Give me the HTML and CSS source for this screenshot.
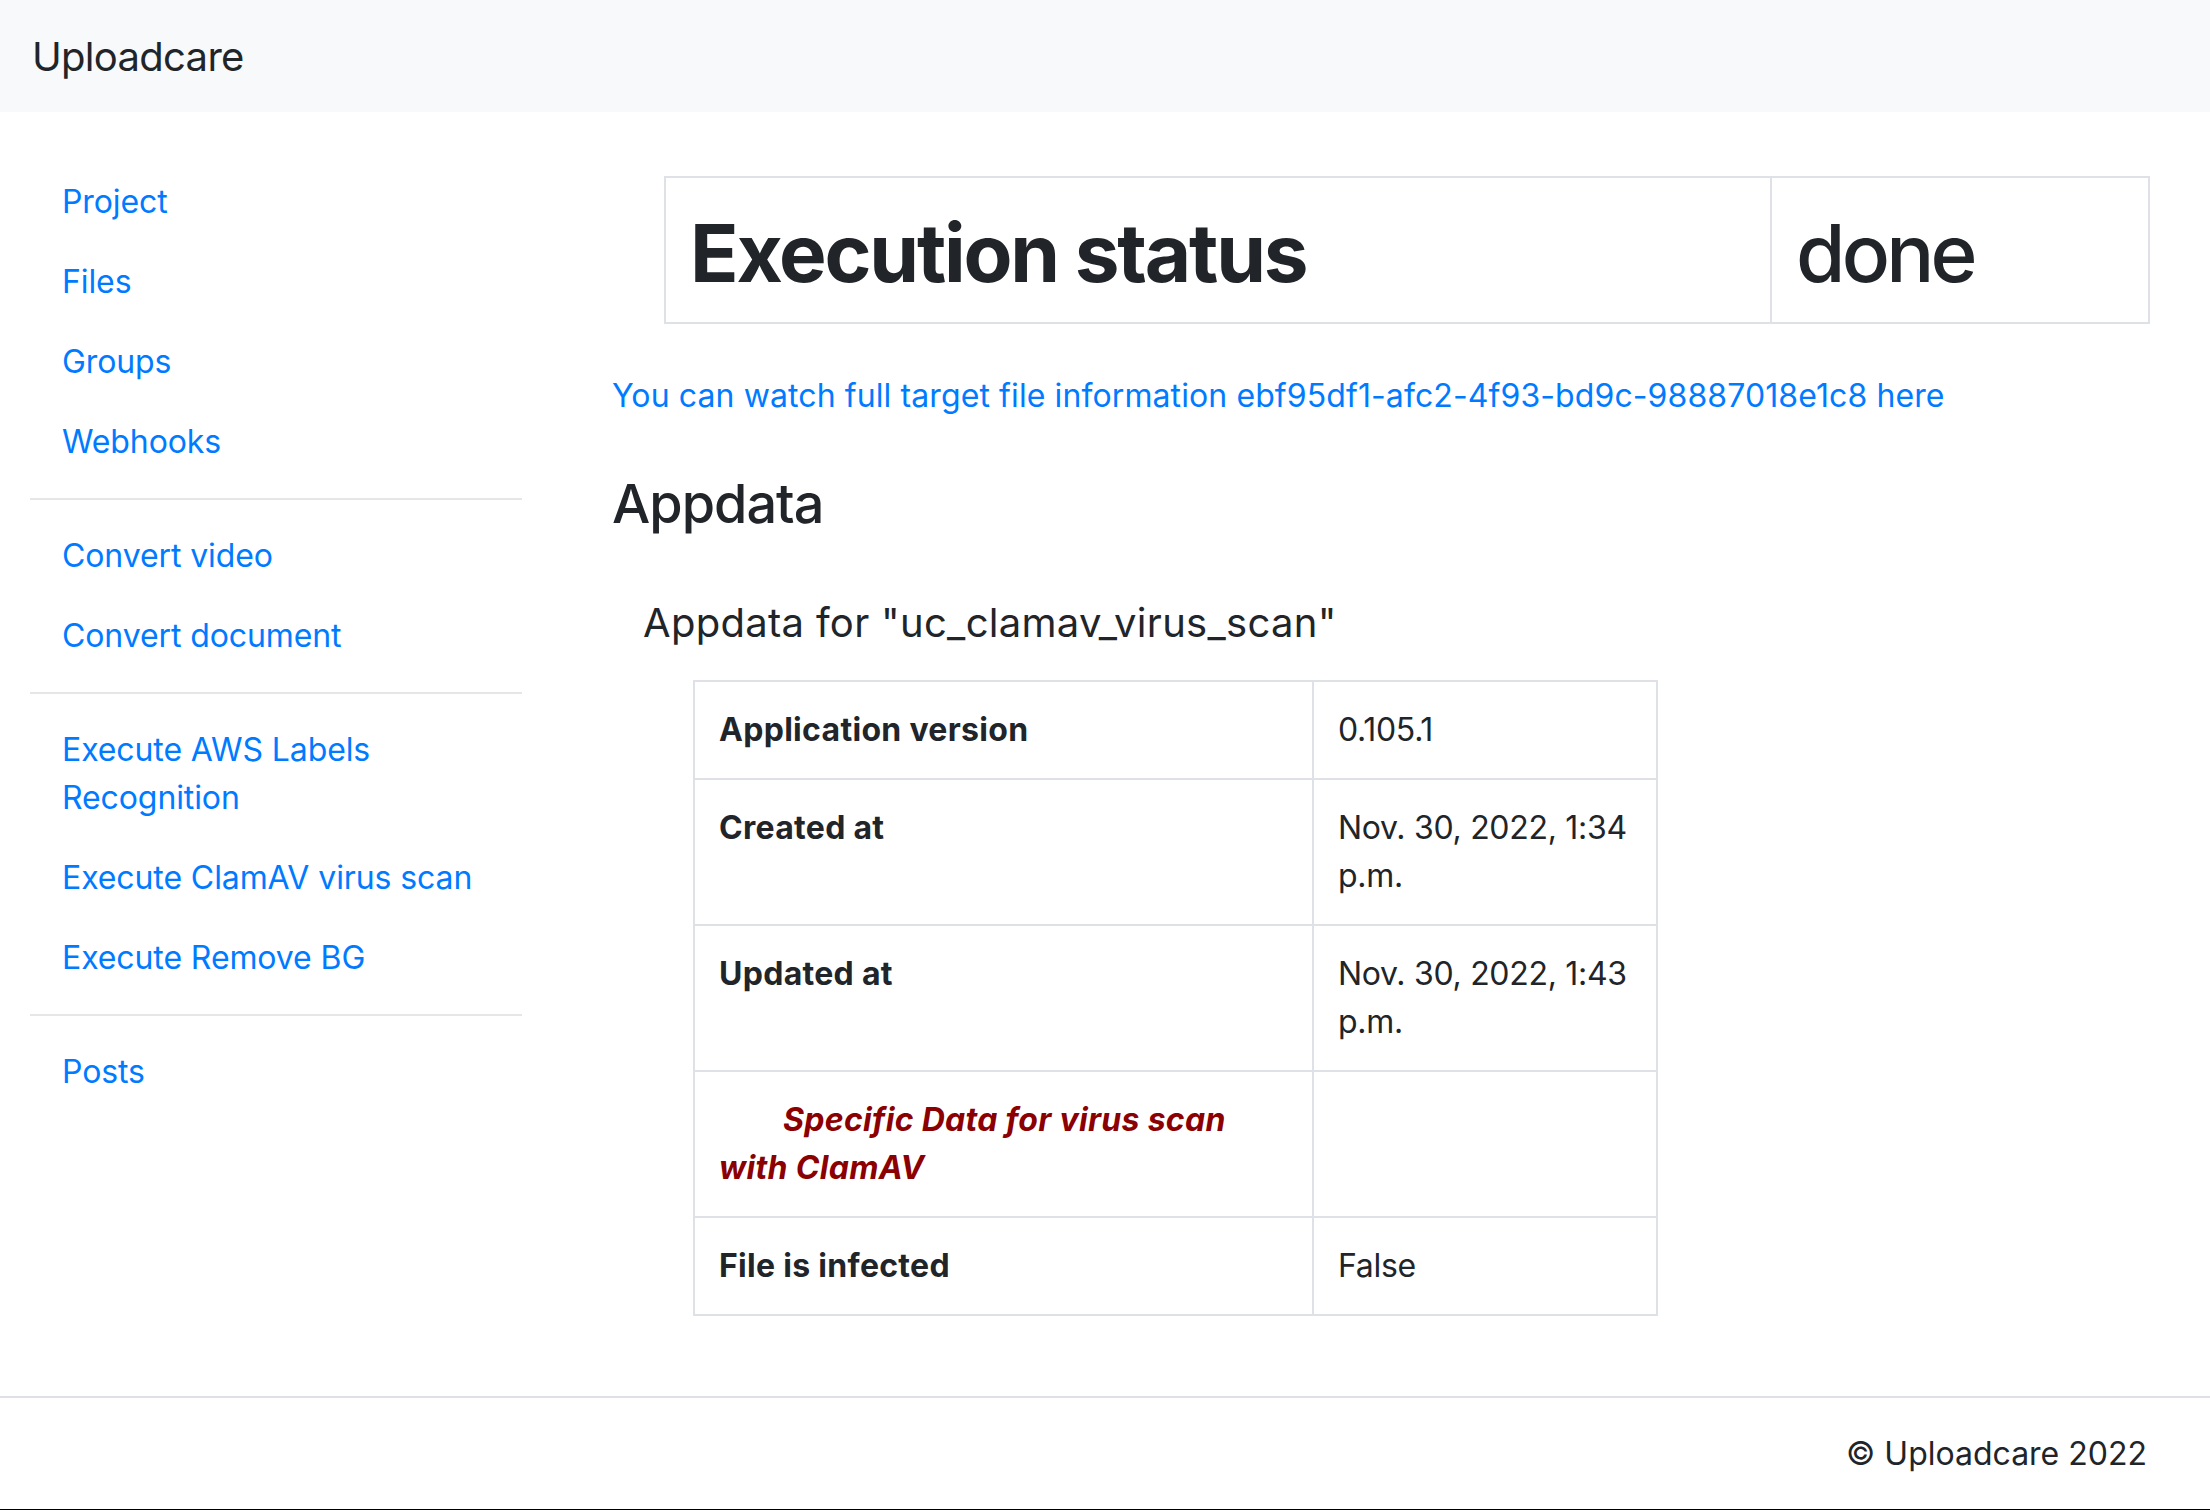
FILE: index.html
```html
<!DOCTYPE html>
<html lang="en">
<head>
<meta charset="utf-8">
<title>Uploadcare</title>
<link rel="stylesheet" href="styles.css">
</head>
<body>
<nav class="navbar">
  <a class="brand" href="#">Uploadcare</a>
</nav>
<div class="layout">
  <aside class="sidebar">
    <ul class="nav">
      <li><a class="nav-link" href="#">Project</a></li>
      <li><a class="nav-link" href="#">Files</a></li>
      <li><a class="nav-link" href="#">Groups</a></li>
      <li><a class="nav-link" href="#">Webhooks</a></li>
    </ul>
    <hr class="divider">
    <ul class="nav">
      <li><a class="nav-link" href="#">Convert video</a></li>
      <li><a class="nav-link" href="#">Convert document</a></li>
    </ul>
    <hr class="divider">
    <ul class="nav">
      <li><a class="nav-link" href="#">Execute AWS Labels Recognition</a></li>
      <li><a class="nav-link" href="#">Execute ClamAV virus scan</a></li>
      <li><a class="nav-link" href="#">Execute Remove BG</a></li>
    </ul>
    <hr class="divider">
    <ul class="nav">
      <li><a class="nav-link" href="#">Posts</a></li>
    </ul>
  </aside>
  <main class="main">
    <table class="status-table">
      <colgroup><col class="status-col-label"><col class="status-col-value"></colgroup>
      <tr>
        <th><h1 class="status-label">Execution status</h1></th>
        <td><h1 class="status-value">done</h1></td>
      </tr>
    </table>
    <p class="target-link"><a href="#">You can watch full target file information ebf95df1-afc2-4f93-bd9c-98887018e1c8 here</a></p>
    <h3 class="section-title">Appdata</h3>
    <h5 class="app-title">Appdata for "uc_clamav_virus_scan"</h5>
    <table class="data-table">
      <colgroup><col class="data-col-label"><col class="data-col-value"></colgroup>
      <tr><th>Application version</th><td>0.105.1</td></tr>
      <tr><th>Created at</th><td>Nov. 30, 2022, 1:34 p.m.</td></tr>
      <tr><th>Updated at</th><td>Nov. 30, 2022, 1:43 p.m.</td></tr>
      <tr><th class="specific">Specific Data for virus scan with ClamAV</th><td></td></tr>
      <tr><th>File is infected</th><td>False</td></tr>
    </table>
  </main>
</div>
<footer class="footer">© Uploadcare 2022</footer>
</body>
</html>
```

FILE: styles.css
```css
html, body {
  margin: 0;
  padding: 0;
}

body {
  font-family: Inter, "Noto Sans", "Liberation Sans", sans-serif;
  font-size: 32px;
  line-height: 48px;
  color: #212529;
  background: #fff;
  min-height: 100vh;
  display: flex;
  flex-direction: column;
}

a {
  color: #007bff;
  text-decoration: none;
}

.navbar {
  height: 112px;
  box-sizing: border-box;
  background: #f8f9fa;
  padding: 2px 32px 0 32px;
  display: flex;
  align-items: center;
}

.brand {
  color: #212529;
  font-size: 40px;
  line-height: 60px;
  letter-spacing: -0.7px;
}

.layout {
  display: flex;
  flex: 1;
}

.sidebar {
  width: 552px;
  flex: none;
  box-sizing: border-box;
  padding: 50px 30px 0 30px;
}

.nav {
  list-style: none;
  margin: 0;
  padding: 0;
}

.nav-link {
  display: block;
  padding: 16px 32px;
  letter-spacing: -0.1px;
}

.divider {
  border: 0;
  border-top: 2px solid #e6e6e6;
  margin: 16px 0;
}

.main {
  flex: 1;
  min-width: 0;
  padding: 64px 50px 0 60px;
}

.status-table {
  margin: 0 0 48px 52px;
  width: 1486px;
  border-collapse: collapse;
  table-layout: fixed;
}

.status-col-label { width: 1106px; }

.status-table th,
.status-table td {
  border: 2px solid #dee2e6;
  padding: 27px 24px 21px 24px;
  text-align: left;
  vertical-align: top;
}

.status-label,
.status-value {
  margin: 0;
  font-size: 80px;
  line-height: 96px;
}

.status-label {
  font-weight: 700;
  letter-spacing: -2.2px;
}

.status-value {
  font-weight: 500;
  letter-spacing: -3.8px;
}

.target-link {
  margin: 0 0 50px 0;
  letter-spacing: 0.1px;
}

.section-title {
  margin: 0 0 64px 0;
  font-size: 54px;
  line-height: 67px;
  font-weight: 500;
  letter-spacing: -1px;
}

.app-title {
  margin: 0 0 36px 31px;
  font-size: 40px;
  line-height: 43px;
  font-weight: 400;
  letter-spacing: 0.3px;
}

.data-table {
  margin-left: 81px;
  width: 965px;
  border-collapse: collapse;
  table-layout: fixed;
}

.data-col-label { width: 619px; }

.data-table th,
.data-table td {
  border: 2px solid #dee2e6;
  padding: 24px;
  text-align: left;
  vertical-align: top;
}

.data-table th {
  font-weight: 700;
  letter-spacing: 0.3px;
}

.data-table td {
  font-weight: 400;
  letter-spacing: -0.3px;
}

.data-table .specific {
  color: #8b0000;
  font-style: italic;
  text-indent: 64px;
}

.footer {
  margin-top: auto;
  border-top: 2px solid #dee2e6;
  border-bottom: 1px solid #000;
  padding: 32px 63px 31px 32px;
  text-align: right;
}
```
